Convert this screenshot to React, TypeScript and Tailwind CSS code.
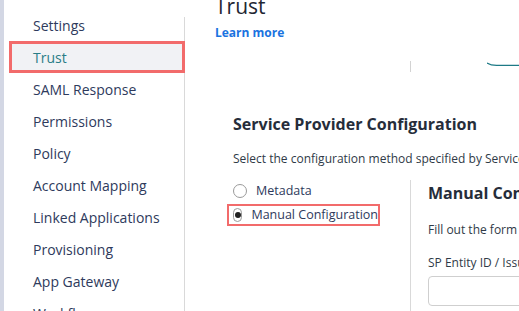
import React from "react";

const items = [
  "Settings",
  "Trust",
  "SAML Response",
  "Permissions",
  "Policy",
  "Account Mapping",
  "Linked Applications",
  "Provisioning",
  "App Gateway",
  "Workflow",
];

export default function App() {
  return (
    <div
      className="flex h-[311px] w-[519px] overflow-hidden bg-white"
      style={{ fontFamily: '"Open Sans", "Liberation Sans", sans-serif' }}
    >
      <div className="w-[4px] shrink-0 bg-[#d3d7e4]" />
      <div className="mt-[17px] w-[181px] shrink-0 border-r border-[#d9d9d9]">
        <div className="-mt-[8px] flex flex-col">
          {items.map((it) =>
            it === "Trust" ? (
              <div
                key={it}
                className="ml-[5px] mr-[-1px] flex h-[32px] items-center border-[3px] border-[#f26b6b] bg-[#f1f2f5] pl-[21px] text-[14px] text-[#2a7d87]"
              >
                {it}
              </div>
            ) : (
              <div
                key={it}
                className="flex h-[32px] items-center pl-[29px] text-[14px] text-[#2e3a5c]"
              >
                {it}
              </div>
            )
          )}
        </div>
      </div>
      <div className="relative flex min-w-0 flex-1 flex-col pl-[30px]">
        <div className="-mt-[8px] text-[21px] leading-[28px] text-[#1f2633]">Trust</div>
        <div className="mt-[5px] text-[12px] font-bold leading-[16px] text-[#1a73e0]">Learn more</div>
        <div className="mt-[20px] flex h-[12px] items-start">
          <div className="ml-[195px] h-[11px] border-l border-[#d3d3d3]" />
          <svg className="ml-[76px] mt-[1px]" width="40" height="6" viewBox="0 0 40 6">
            <path d="M0 0.5 C3 2.5 6 3.5 12 3.5 L40 3.5" fill="none" stroke="#1d7a86" strokeWidth="1.4" />
          </svg>
        </div>
        <div className="ml-[18px] mt-[40px] text-[16px] font-bold leading-[24px] text-[#262d3a]">
          Service Provider Configuration
        </div>
        <div className="ml-[18px] mt-[14px] whitespace-nowrap text-[12px] leading-[17px] text-[#2f3a47]">
          Select the configuration method specified by Service Provider
        </div>
        <div className="mt-[13px] flex">
          <div className="flex w-[195px] shrink-0 flex-col pl-[18px]">
            <label className="flex h-[22px] items-center">
              <span className="h-[14px] w-[14px] rounded-full border border-[#9a9a9a] bg-white" />
              <span className="ml-[9px] text-[12.5px] text-[#2e3a5c]">Metadata</span>
            </label>
            <label className="-ml-[6px] mt-[2px] flex h-[22px] w-[153px] items-center border-[2px] border-[#f26b6b] pl-[4px]">
              <span className="flex h-[14px] w-[14px] items-center justify-center rounded-full border border-[#9a9a9a] bg-white">
                <span className="h-[6px] w-[6px] rounded-full bg-[#222]" />
              </span>
              <span className="ml-[9px] whitespace-nowrap text-[12.5px] text-[#2e3a5c]">Manual Configuration</span>
            </label>
          </div>
          <div className="flex min-w-0 flex-1 flex-col border-l border-[#d9d9d9] pl-[17px]">
            <div className="mt-[2px] whitespace-nowrap text-[16px] font-bold leading-[22px] text-[#262d3a]">
              Manual Configuration
            </div>
            <div className="mt-[17px] whitespace-nowrap text-[12px] leading-[17px] text-[#2f3a47]">
              Fill out the form below
            </div>
            <div className="mt-[16px] whitespace-nowrap text-[12px] leading-[17px] text-[#2f3a47]">
              SP Entity ID / Issuer
            </div>
            <div className="mt-[5px] h-[30px] w-[200px] rounded-[4px] border border-[#cfcfcf]" />
            <div className="h-[40px]" />
          </div>
        </div>
      </div>
    </div>
  );
}
